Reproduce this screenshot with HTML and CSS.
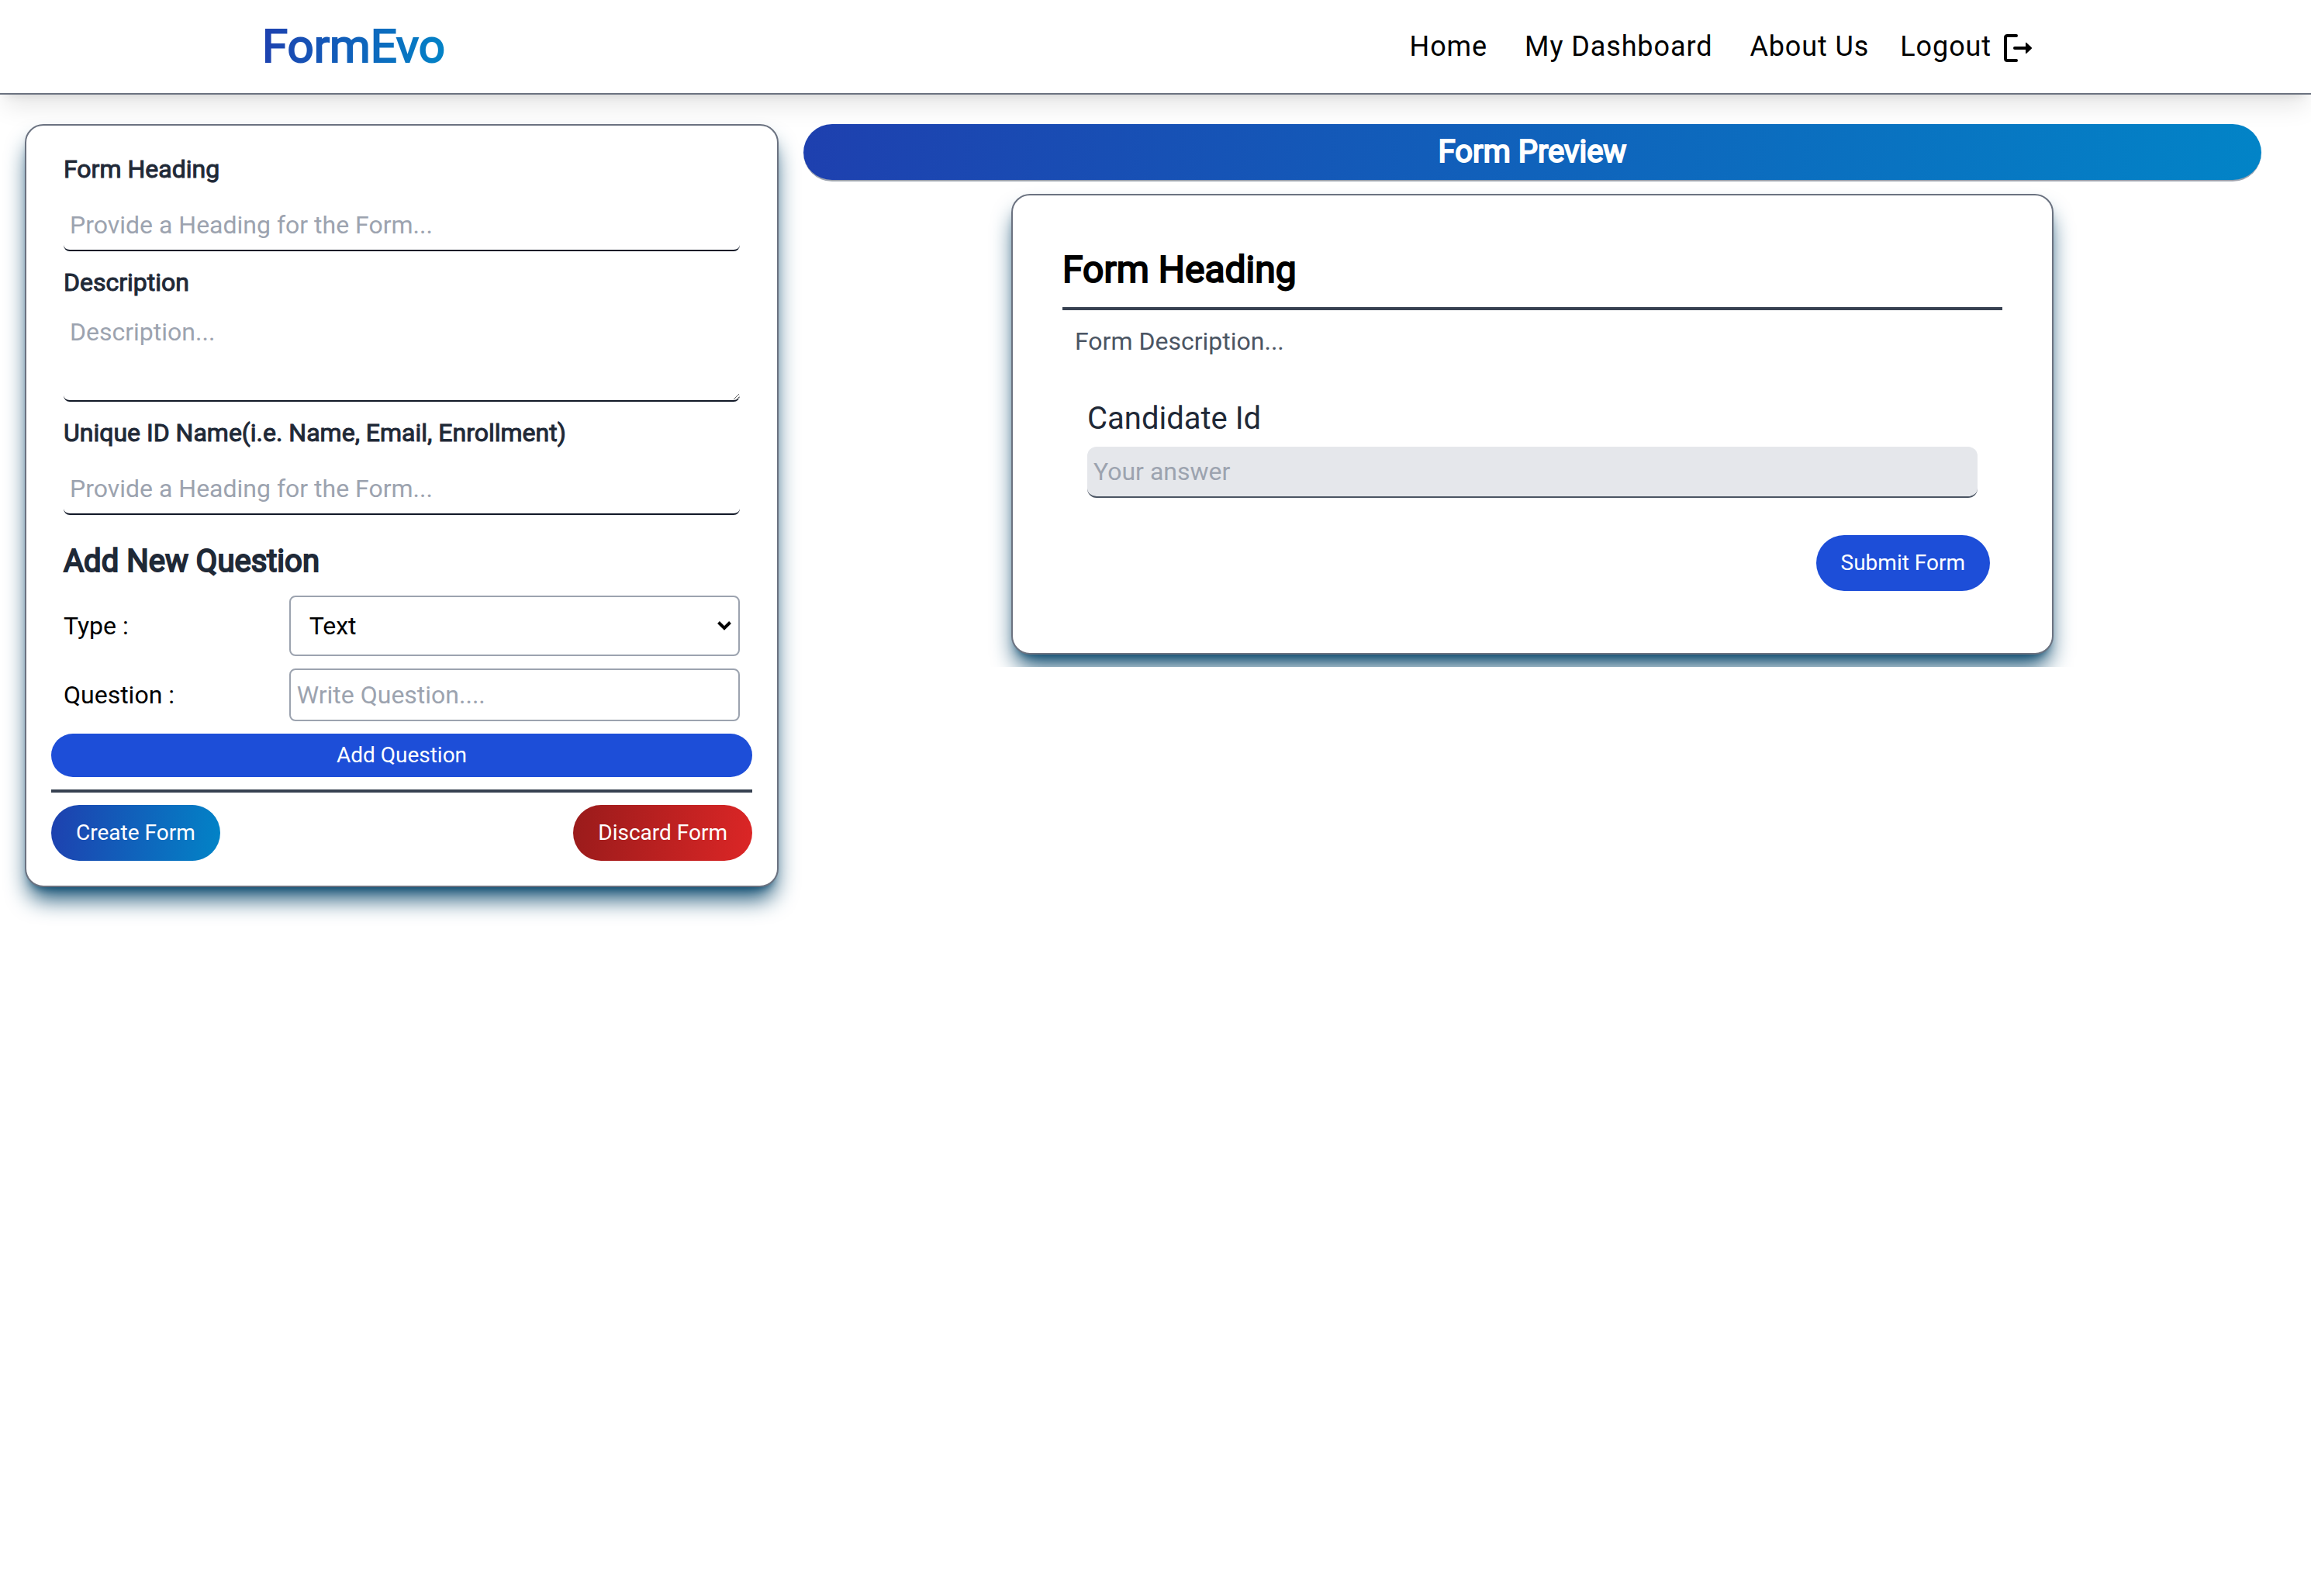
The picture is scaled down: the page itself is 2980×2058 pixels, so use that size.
FILE: index.html
```html
<!DOCTYPE html>
<html lang="en">
<head>
<meta charset="utf-8">
<meta name="viewport" content="width=device-width, initial-scale=1">
<title>FormEvo</title>
<link rel="stylesheet" href="styles.css">
</head>
<body>
<header class="site-header">
  <a class="logo" href="#">FormEvo</a>
  <nav class="nav">
    <a href="#">Home</a>
    <a href="#">My Dashboard</a>
    <a href="#">About Us</a>
    <a class="logout" href="#">Logout
      <svg class="logout-icon" viewBox="0 0 36 36" aria-hidden="true">
        <path d="M16 2H4.500Q2 2 2 4.500V31.500Q2 34 4.500 34H16M14 18H30" fill="none" stroke="currentColor" stroke-width="4" stroke-linecap="round"/>
        <path d="M28 11.500Q28 10.500 29 11L35.500 17Q36.500 18 35.500 19L29 25Q28 25.500 28 24.500Z" fill="currentColor"/>
      </svg>
    </a>
  </nav>
</header>
<main class="workspace">
  <form class="builder card">
    <div class="fields">
      <label class="label" for="heading">Form Heading</label>
      <input class="line-input" id="heading" type="text" placeholder="Provide a Heading for the Form...">
      <label class="label" for="description">Description</label>
      <textarea class="line-input line-area" id="description" placeholder="Description..."></textarea>
      <label class="label" for="unique">Unique ID Name(i.e. Name, Email, Enrollment)</label>
      <input class="line-input" id="unique" type="text" placeholder="Provide a Heading for the Form...">
    </div>
    <div class="question">
      <h2 class="question-title">Add New Question</h2>
      <label for="type">Type :</label>
      <select class="box-input box-select" id="type"><option>Text</option></select>
      <label for="question">Question :</label>
      <input class="box-input" id="question" type="text" placeholder="Write Question....">
    </div>
    <button class="button add-button" type="button">Add Question</button>
    <div class="actions">
      <button class="button create-button" type="button">Create Form</button>
      <button class="button discard-button" type="button">Discard Form</button>
    </div>
  </form>
  <section class="preview">
    <h2 class="preview-title">Form Preview</h2>
    <div class="preview-body">
      <form class="preview-card card">
        <h1 class="preview-heading">Form Heading</h1>
        <p class="preview-description">Form Description...</p>
        <div class="answer">
          <label class="answer-label" for="candidate">Candidate Id</label>
          <input class="answer-input" id="candidate" type="text" placeholder="Your answer">
        </div>
        <button class="button submit-button" type="button">Submit Form</button>
      </form>
    </div>
  </section>
</main>
</body>
</html>
```
FILE: styles.css
```css
*, *::before, *::after { box-sizing: border-box; }

body {
  margin: 0;
  background: #fff;
  color: #000;
  font: 400 32px/48px Roboto, "Liberation Sans", sans-serif;
}

h1, h2, p { margin: 0; font-weight: 400; }
a { color: inherit; text-decoration: none; }
input, select, textarea, button { margin: 0; font: inherit; color: inherit; outline: none; }
::placeholder { color: #9ca3af; opacity: 1; }

.site-header {
  display: flex;
  align-items: center;
  justify-content: space-between;
  padding: 24px 360px 24px 338px;
  border-bottom: 2px solid #6b7280;
  background: #fff;
  box-shadow: 0 20px 30px -6px rgba(0, 0, 0, .1), 0 8px 12px -8px rgba(0, 0, 0, .1);
}

.logo {
  font-size: 60px;
  line-height: 72px;
  color: transparent;
  background: linear-gradient(98deg, #1e40af, #0284c7);
  -webkit-background-clip: text;
  background-clip: text;
  -webkit-text-stroke: 2px transparent;
}

.nav {
  display: flex;
  align-items: center;
  gap: 48px;
  font-size: 36px;
  line-height: 56px;
  letter-spacing: 0.025em;
}

.logout { display: flex; align-items: center; gap: 16px; margin-left: -8px; }
.logout-icon { width: 36px; height: 36px; margin-top: 4px; }

.workspace {
  display: grid;
  grid-template-columns: 972fr 1880fr;
  align-items: start;
  gap: 32px;
  padding: 38px 64px 64px 32px;
}

.card {
  border: 2px solid #6b7280;
  border-radius: 24px;
  background: #fff;
  box-shadow: 0 20px 30px -6px #0c4a6e, 0 8px 12px -8px #0c4a6e;
}

.builder { padding: 32px; }
.fields { display: flex; flex-direction: column; padding: 0 16px; }

.label { -webkit-text-stroke: 1px; }
.question-title, .preview-title, .preview-heading { -webkit-text-stroke: 2px; }
.label, .question-title { color: #1f2937; }

.line-input {
  width: 100%;
  height: 66px;
  margin: 16px 0;
  padding: 8px;
  border: 0;
  border-bottom: 2px solid #111827;
  border-radius: 8px;
  background: #fff;
}

.line-area { display: block; height: 122px; margin-top: 8px; resize: vertical; }

.question {
  display: grid;
  grid-template-columns: 1fr 2fr;
  align-items: center;
  row-gap: 16px;
  padding: 16px;
}

.question-title { grid-column: 1 / -1; font-size: 40px; line-height: 56px; }

.box-input {
  width: 100%;
  height: 68px;
  padding: 8px;
  border: 2px solid #9ca3af;
  border-radius: 8px;
  background: #fff;
}

.box-select {
  appearance: none;
  height: 78px;
  padding: 8px 32px 8px 24px;
  background: #fff url("data:image/svg+xml,%3Csvg xmlns='http://www.w3.org/2000/svg' width='18' height='12' viewBox='0 0 18 12'%3E%3Cpath d='M1.500 1.500L9 9L16.500 1.500' fill='none' stroke='%23000' stroke-width='4'/%3E%3C/svg%3E") no-repeat right 9px center;
}

.button {
  padding: 16px 32px;
  border: 0;
  border-radius: 36px;
  background: #1d4ed8;
  color: #fff;
  font-size: 28px;
  line-height: 40px;
}

.add-button { width: 100%; padding: 8px; }

.actions {
  display: flex;
  justify-content: space-between;
  margin-top: 16px;
  padding-top: 16px;
  border-top: 4px solid #374151;
}

.create-button { background: linear-gradient(98deg, #1e40af, #0284c7); }
.discard-button { background: linear-gradient(98deg, #991b1b, #dc2626); }

.preview-title {
  padding: 8px;
  border-bottom: 2px solid #9ca3af;
  border-radius: 37px;
  background: linear-gradient(98deg, #1e40af, #0284c7);
  color: #fff;
  font-size: 40px;
  line-height: 56px;
  text-align: center;
}

.preview-body { overflow: hidden; padding: 16px; }

.preview-card {
  display: flex;
  flex-direction: column;
  max-width: 1344px;
  margin: 0 auto;
  padding: 64px;
}

.preview-heading {
  padding-bottom: 16px;
  border-bottom: 4px solid #374151;
  font-size: 48px;
  line-height: 64px;
}

.preview-description { padding: 16px; color: #4b5563; }
.answer { padding: 32px; }
.answer-label { display: block; color: #1f2937; font-size: 40px; line-height: 56px; }

.answer-input {
  display: block;
  width: 100%;
  height: 66px;
  margin-top: 8px;
  padding: 8px;
  border: 0;
  border-bottom: 2px solid #4b5563;
  border-radius: 12px;
  background: #e5e7eb;
}

.submit-button { align-self: flex-end; margin: 16px; }
```
